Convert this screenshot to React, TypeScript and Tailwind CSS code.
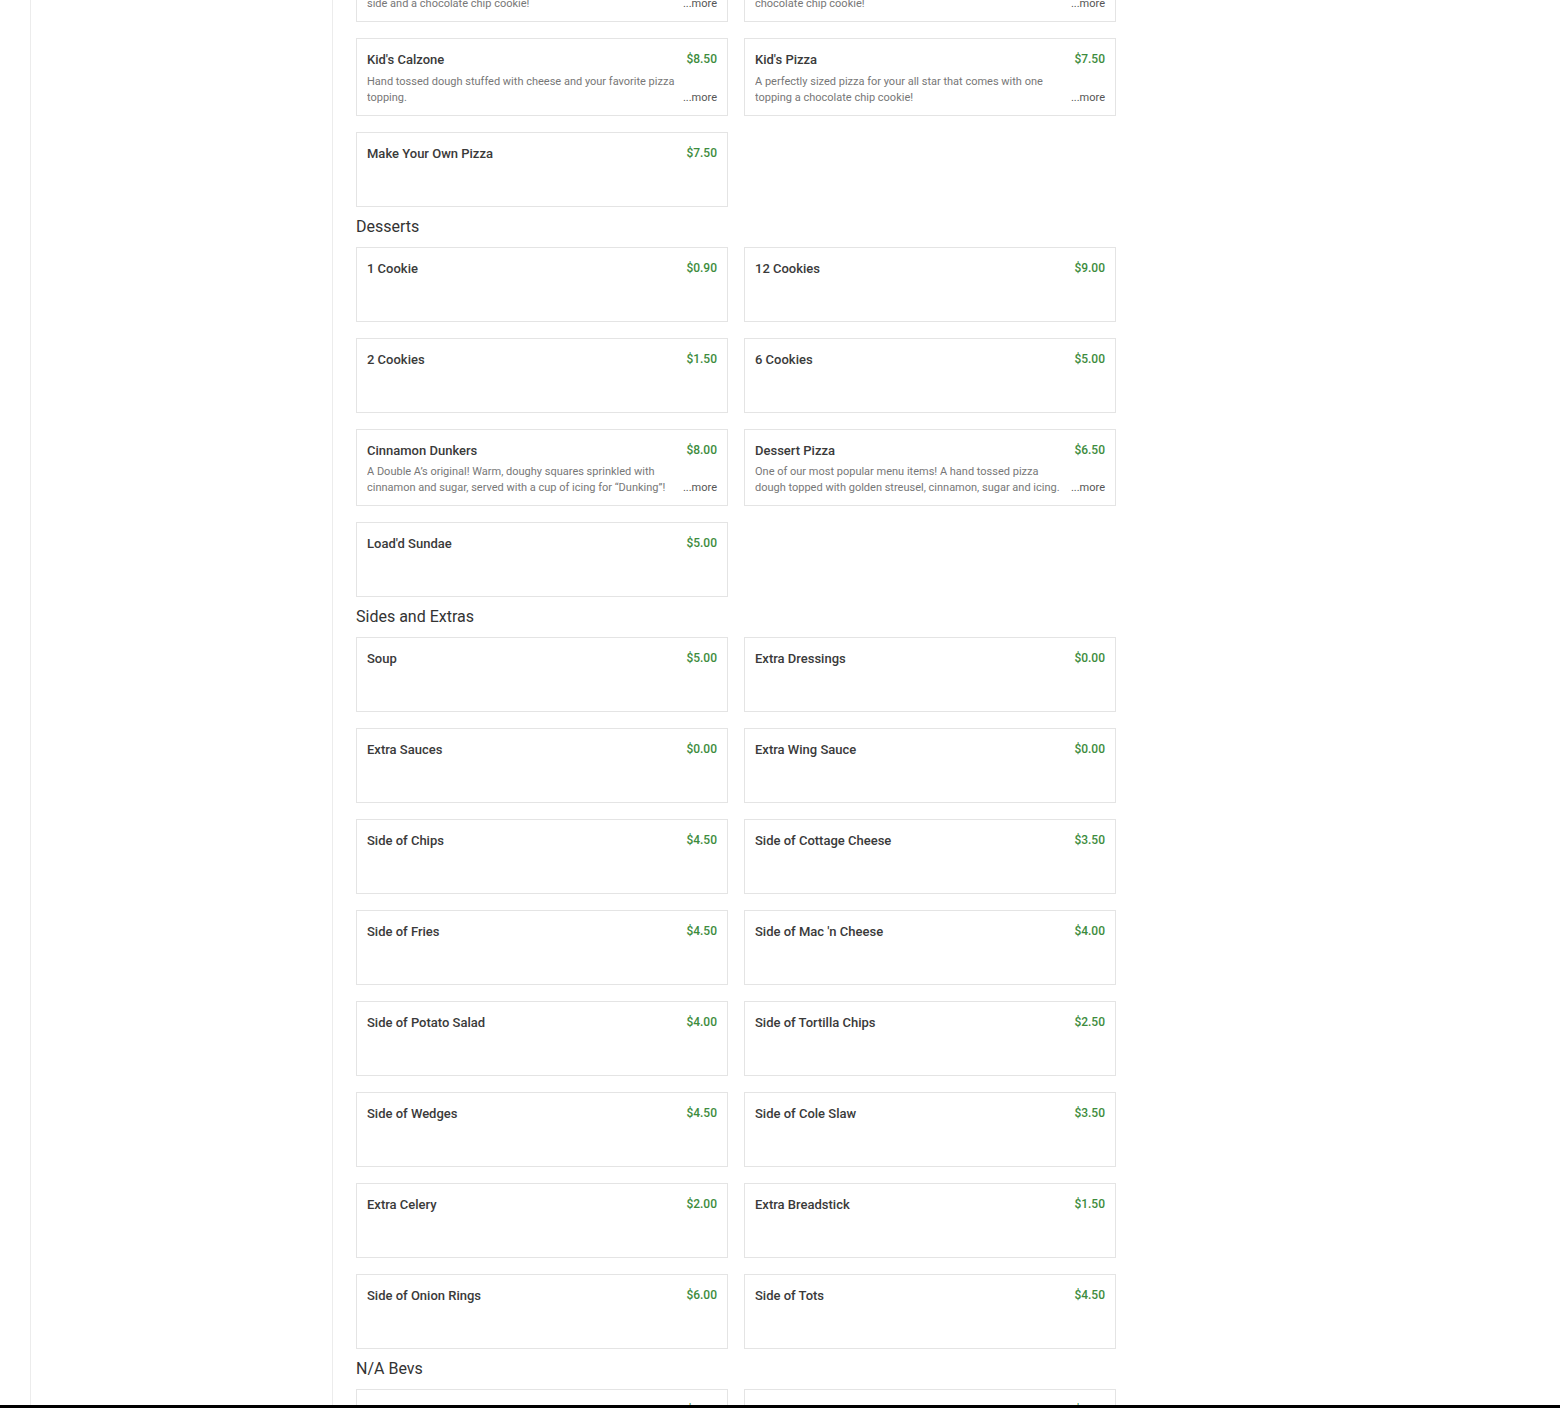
import React from "react";

type Item = {
  name: string;
  price: string;
  desc?: string;
};

type Section = {
  title?: string;
  items: Item[];
};

const sections: Section[] = [
  {
    items: [
      {
        name: "Kid's Chicken Tenders",
        price: "$7.50",
        desc: "Crispy chicken tenders for your little all star, served with one side and a chocolate chip cookie!",
      },
      {
        name: "Kid's Grilled Cheese",
        price: "$7.50",
        desc: "A classic grilled cheese for your all star that comes with a chocolate chip cookie!",
      },
      {
        name: "Kid's Calzone",
        price: "$8.50",
        desc: "Hand tossed dough stuffed with cheese and your favorite pizza topping.",
      },
      {
        name: "Kid's Pizza",
        price: "$7.50",
        desc: "A perfectly sized pizza for your all star that comes with one topping a chocolate chip cookie!",
      },
      { name: "Make Your Own Pizza", price: "$7.50" },
    ],
  },
  {
    title: "Desserts",
    items: [
      { name: "1 Cookie", price: "$0.90" },
      { name: "12 Cookies", price: "$9.00" },
      { name: "2 Cookies", price: "$1.50" },
      { name: "6 Cookies", price: "$5.00" },
      {
        name: "Cinnamon Dunkers",
        price: "$8.00",
        desc: "A Double A\u2019s original! Warm, doughy squares sprinkled with cinnamon and sugar, served with a cup of icing for \u201cDunking\u201d!",
      },
      {
        name: "Dessert Pizza",
        price: "$6.50",
        desc: "One of our most popular menu items! A hand tossed pizza dough topped with golden streusel, cinnamon, sugar and icing.",
      },
      { name: "Load'd Sundae", price: "$5.00" },
    ],
  },
  {
    title: "Sides and Extras",
    items: [
      { name: "Soup", price: "$5.00" },
      { name: "Extra Dressings", price: "$0.00" },
      { name: "Extra Sauces", price: "$0.00" },
      { name: "Extra Wing Sauce", price: "$0.00" },
      { name: "Side of Chips", price: "$4.50" },
      { name: "Side of Cottage Cheese", price: "$3.50" },
      { name: "Side of Fries", price: "$4.50" },
      { name: "Side of Mac 'n Cheese", price: "$4.00" },
      { name: "Side of Potato Salad", price: "$4.00" },
      { name: "Side of Tortilla Chips", price: "$2.50" },
      { name: "Side of Wedges", price: "$4.50" },
      { name: "Side of Cole Slaw", price: "$3.50" },
      { name: "Extra Celery", price: "$2.00" },
      { name: "Extra Breadstick", price: "$1.50" },
      { name: "Side of Onion Rings", price: "$6.00" },
      { name: "Side of Tots", price: "$4.50" },
    ],
  },
  {
    title: "N/A Bevs",
    items: [
      { name: "Bottled Water", price: "$1.50" },
      { name: "Fountain Drink", price: "$2.50" },
    ],
  },
];

const ItemCard = ({ item }: { item: Item }) => {
  return (
    <div className="flex min-h-[75px] flex-col border border-[#e4e4e4] bg-white px-[10px] pb-[9px] pt-[12px]">
      <div className="flex items-start justify-between gap-3">
        <span className="text-[13px] font-medium leading-[18px] text-[#3a3a3a]">
          {item.name}
        </span>
        <span className="text-[12px] font-medium leading-[16px] text-[#3d8c3d]">
          {item.price}
        </span>
      </div>
      {item.desc && (
        <div className="mt-[4.75px] flex items-end justify-between gap-2">
          <p className="line-clamp-2 max-w-[310px] text-[11px] leading-[16px] text-[#777]">
            {item.desc}
          </p>
          <span className="shrink-0 text-[11px] leading-[16px] text-[#555]">
            ...more
          </span>
        </div>
      )}
    </div>
  );
};

const MenuSection = ({ section }: { section: Section }) => {
  return (
    <div>
      {section.title && (
        <h2 className="pb-[8px] pt-[8px] text-[16px] leading-6 text-[#333]">
          {section.title}
        </h2>
      )}
      <div className="grid grid-cols-[372px_372px] gap-4">
        {section.items.map((item) => (
          <ItemCard key={item.name} item={item} />
        ))}
      </div>
    </div>
  );
};

export default function App() {
  return (
    <div
      className="flex h-[1408px] flex-col overflow-hidden bg-white"
      style={{ fontFamily: "Roboto, 'Liberation Sans', sans-serif" }}
    >
      <div className="flex min-h-0 flex-1 overflow-hidden">
        {/* sidebar */}
        <aside className="ml-[30px] w-[303px] shrink-0 border-x border-[#ececec]" />
        <main className="min-w-0 flex-1 overflow-hidden pl-[23px]">
          {/* page is scrolled: first row is cut at the top */}
          <div className="-mt-[56px] flex flex-col">
            {sections.map((s, i) => (
              <MenuSection key={i} section={s} />
            ))}
          </div>
        </main>
      </div>
      <div className="h-[3px] shrink-0 bg-black" />
    </div>
  );
}
